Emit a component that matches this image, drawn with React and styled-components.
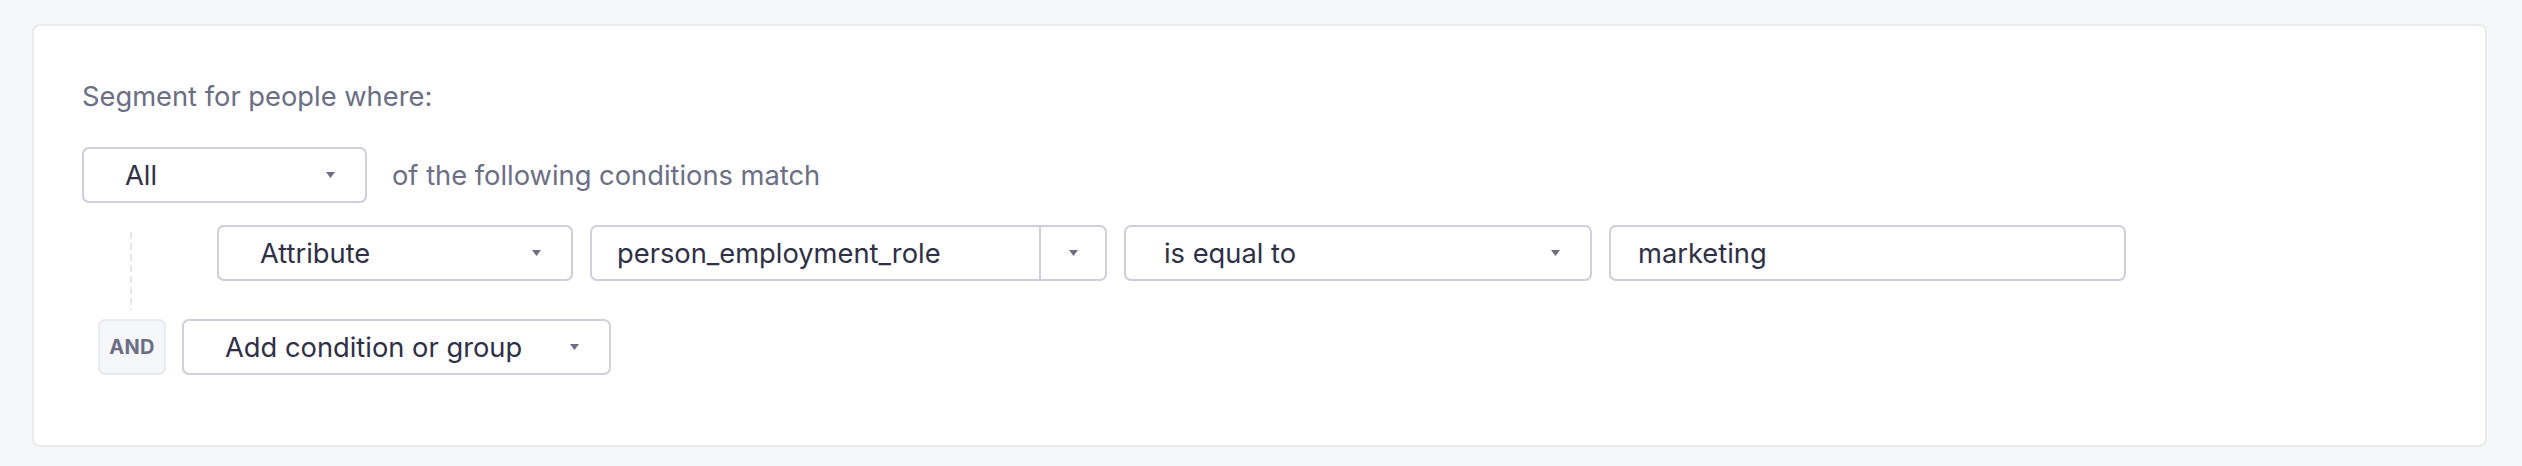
import React from "react";
import styled, { createGlobalStyle } from "styled-components";

const Global = createGlobalStyle`
  html, body { margin: 0; padding: 0; background: #f6f7f9; }
  body { font-family: Inter, "Noto Sans", sans-serif; -webkit-font-smoothing: antialiased; }
`;

const Page = styled.div`
  padding: 24px 35px 21px 32px;
  background: #f6f7f9;
`;

const Card = styled.section`
  background: #fff;
  border: 2px solid #e9eaee;
  border-radius: 8px;
  padding: 51px 48px 70px 48px;
  box-sizing: border-box;
`;

const Title = styled.div`
  font-size: 27.3px;
  line-height: 40px;
  color: #6b6e84;
  margin-bottom: 30px;
`;

const MatchRow = styled.div`
  display: flex;
  align-items: center;
  gap: 25px;
`;

const Label = styled.span`
  font-size: 27.3px;
  color: #6b6e84;
`;

const Box = styled.div`
  box-sizing: border-box;
  width: ${(p) => p.$w}px;
  height: 56px;
  border: 2px solid #cfcedc;
  border-radius: 7px;
  background: #fff;
  display: flex;
  align-items: center;
  flex: none;
`;

const Value = styled.span`
  flex: 1;
  font-size: 27.3px;
  color: #2f2f47;
  padding-left: ${(p) => p.$pl}px;
  white-space: nowrap;
`;

const ArrowSlot = styled.span`
  display: flex;
  align-items: center;
  justify-content: center;
  padding-right: ${(p) => (p.$split ? 0 : 30)}px;
  width: ${(p) => (p.$split ? "64px" : "auto")};
  height: 100%;
  border-left: ${(p) => (p.$split ? "2px solid #cfcedc" : "none")};
`;

const Arrow = () => (
  <svg width="9" height="6" viewBox="0 0 9 6">
    <polygon points="0,0 9,0 4.5,6" fill="#6c6e84" />
  </svg>
);

const Select = ({ w, pl = 40, value, split }) => (
  <Box $w={w}>
    <Value $pl={pl}>{value}</Value>
    <ArrowSlot $split={split}>
      <Arrow />
    </ArrowSlot>
  </Box>
);

const Input = ({ w, value }) => (
  <Box $w={w}>
    <Value $pl={27}>{value}</Value>
  </Box>
);

const Conditions = styled.div`
  position: relative;
  margin-top: 22px;
  padding-left: 135px;
  padding-bottom: 38px;
  &::before {
    content: "";
    position: absolute;
    left: 48px;
    top: 7px;
    bottom: 9px;
    width: 2px;
    background: repeating-linear-gradient(to bottom, #e5e6eb 0 7px, transparent 7px 11px);
  }
`;

const ConditionRow = styled.div`
  display: flex;
  align-items: center;
  gap: 17px;
`;

const AddRow = styled.div`
  display: flex;
  align-items: center;
  gap: 16px;
  margin-left: 16px;
`;

const AndBadge = styled.div`
  box-sizing: border-box;
  width: 68px;
  height: 56px;
  border: 2px solid #e8e9ee;
  border-radius: 7px;
  background: #f5f6f9;
  display: flex;
  align-items: center;
  justify-content: center;
  font-size: 20px;
  font-weight: 700;
  color: #6b6e84;
  letter-spacing: 0.3px;
`;

export default function App() {
  return (
    <>
      <Global />
      <Page>
        <Card>
          <Title>Segment for people where:</Title>
          <MatchRow>
            <Select w={285} pl={41} value="All" />
            <Label>of the following conditions match</Label>
          </MatchRow>
          <Conditions>
            <ConditionRow>
              <Select w={356} pl={41} value="Attribute" />
              <Select w={517} pl={25} value="person_employment_role" split />
              <Select w={468} pl={38} value="is equal to" />
              <Input w={517} value="marketing" />
            </ConditionRow>
          </Conditions>
          <AddRow>
            <AndBadge>AND</AndBadge>
            <Select w={429} pl={41} value="Add condition or group" />
          </AddRow>
        </Card>
      </Page>
    </>
  );
}
